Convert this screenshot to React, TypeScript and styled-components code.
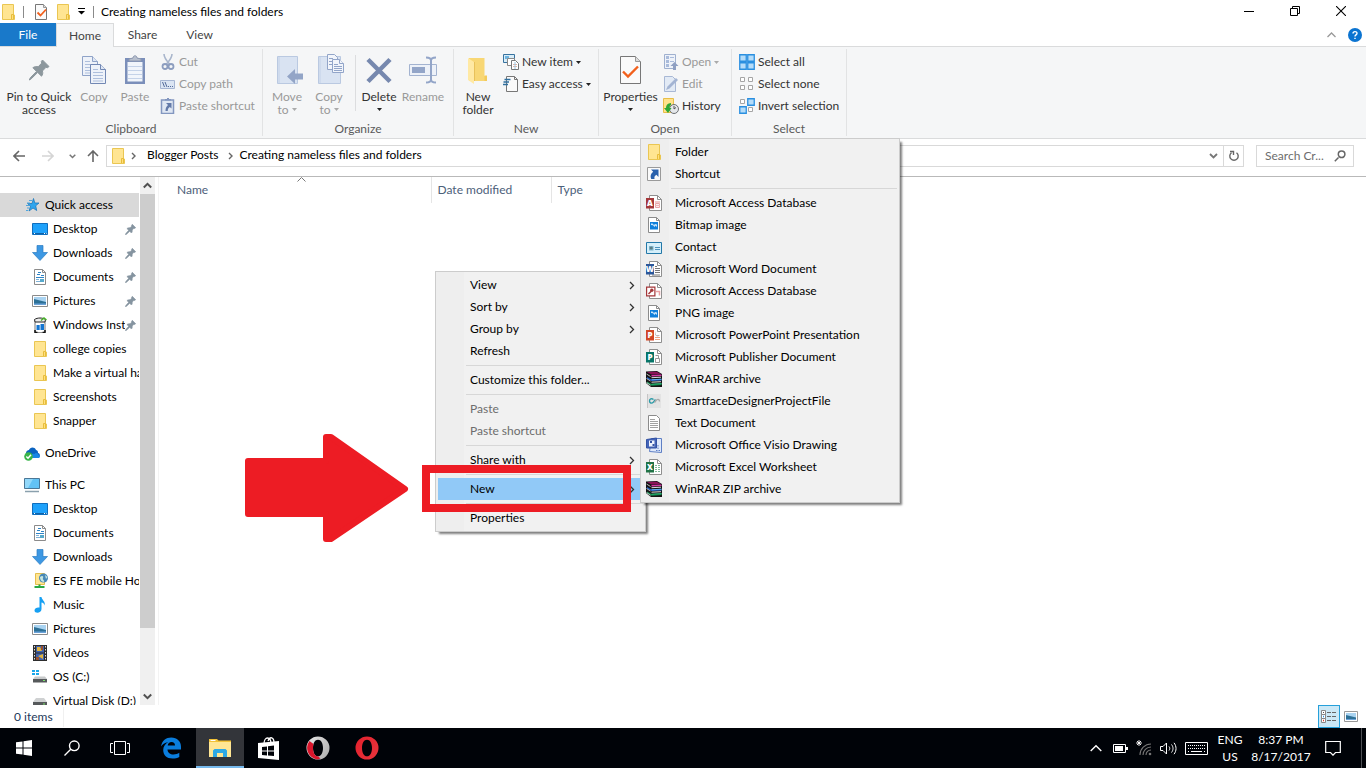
import React from "react";
import styled, { createGlobalStyle, css } from "styled-components";

const GlobalStyle = createGlobalStyle`
  *, *::before, *::after { box-sizing: border-box; }
  body { margin: 0; background: #fff; }
  button, input, table { font: inherit; color: inherit; }
  button { border: 0; background: none; padding: 0; margin: 0; text-align: left; }
  ul, ol { list-style: none; margin: 0; padding: 0; }
  svg { display: block; flex: none; }
`;

const Desktop = styled.div`
  position: relative;
  display: flex;
  flex-direction: column;
  height: 100vh;
  overflow: hidden;
  background: #fff;
  color: #000;
  font: 12px/16px Lato, "Noto Sans", sans-serif;
`;

/* ---------- title bar ---------- */

const TitleBar = styled.header`
  display: flex;
  align-items: center;
  height: 23px;
  flex: none;
  padding-right: 2px;
`;
const QuickTools = styled.div`
  display: flex;
  align-items: center;
  height: 23px;
  gap: 6px;
`;
const Tick = styled.span`
  width: 1px;
  height: 12px;
  margin: 0 3px 0 1px;
  background: #8a8a8a;
`;
const WindowTitle = styled.h1`
  flex: 1;
  margin: 0;
  padding-left: 4px;
  font-size: 12px;
  font-weight: 400;
  line-height: 23px;
`;
const WindowButton = styled.button`
  display: flex;
  align-items: center;
  justify-content: center;
  width: 46px;
  height: 20px;
  margin-bottom: 2px;
`;

/* ---------- ribbon ---------- */

const TabRow = styled.nav`
  display: flex;
  align-items: stretch;
  height: 24px;
  flex: none;
  color: #444;
  border-bottom: 1px solid #dadbdc;
`;
const Tab = styled.button<{ $kind?: "file" | "active" }>`
  width: 56px;
  text-align: center;
  line-height: 22px;
  ${(p) => p.$kind === "file" && css`
    height: 23px;
    background: #1979ca;
    color: #fff;
  `}
  ${(p) => p.$kind === "active" && css`
    width: 58px;
    height: 24px;
    background: #f5f6f7;
    border: 1px solid #dadbdc;
    border-bottom: 0;
    line-height: 20px;
  `}
  ${(p) => !p.$kind && css`
    width: 57px;
  `}
`;
const TabTools = styled.div`
  display: flex;
  align-items: center;
  gap: 12px;
  margin-left: auto;
  padding-right: 4px;
`;
const Ribbon = styled.section`
  display: flex;
  flex: none;
  height: 92px;
  padding: 2px 0;
  background: #f5f6f7;
  border-bottom: 1px solid #dadbdc;
  color: #333;
`;
const Group = styled.div<{ $w: number; $pad?: number }>`
  display: flex;
  flex-direction: column;
  width: ${(p) => p.$w}px;
  padding: 2px 0 0 ${(p) => p.$pad ?? 3}px;
  border-right: 1px solid #e2e3e4;
`;
const GroupBody = styled.div`
  display: flex;
  height: 71px;
`;
const GroupLabel = styled.div<{ $pad?: number }>`
  margin-left: -${(p) => p.$pad ?? 3}px;
  text-align: center;
  line-height: 14px;
  color: #5a5a5a;
`;
const BigButton = styled.button<{ $w: number; $off?: boolean }>`
  display: flex;
  flex-direction: column;
  align-items: center;
  gap: 4px;
  width: ${(p) => p.$w}px;
  padding-top: 3px;
  line-height: 13px;
  text-align: center;
  white-space: nowrap;
  color: ${(p) => (p.$off ? "#999" : "#333")};
`;
const BigLabel = styled.span`
  display: flex;
  flex-direction: column;
  align-items: center;
`;
const LabelLine = styled.span`
  display: flex;
  align-items: center;
  gap: 3px;
  height: 13px;
`;
const SmallColumn = styled.div<{ $gap?: number }>`
  display: flex;
  flex-direction: column;
  margin-left: ${(p) => p.$gap ?? 4}px;
`;
const SmallButton = styled.button<{ $off?: boolean }>`
  display: flex;
  align-items: center;
  gap: 3px;
  height: 22px;
  white-space: nowrap;
  color: ${(p) => (p.$off ? "#999" : "#333")};
`;
const Divider = styled.span`
  width: 1px;
  height: 56px;
  margin: 4px 1px 0 5px;
  background: #dcdddf;
`;

/* ---------- address row ---------- */

const AddressRow = styled.div`
  display: flex;
  flex: none;
  height: 38px;
  padding: 6px 12px 9px 8px;
  border-bottom: 1px solid #b9b9b9;
`;
const NavButtons = styled.div`
  display: flex;
  align-items: center;
  gap: 4px;
  width: 98px;
`;
const NavButton = styled.button<{ $w: number }>`
  display: flex;
  justify-content: center;
  width: ${(p) => p.$w}px;
`;
const AddressBar = styled.div`
  display: flex;
  align-items: center;
  flex: 1;
  height: 22px;
  padding-left: 3px;
  border: 1px solid #d9d9d9;
`;
const Crumb = styled.button`
  padding: 0 9px 2px 7px;
  line-height: 18px;
`;
const BarEnd = styled.div`
  display: flex;
  align-items: center;
  margin-left: auto;
  height: 20px;
`;
const BarButton = styled.button<{ $line?: boolean }>`
  display: flex;
  align-items: center;
  justify-content: center;
  width: 20px;
  height: 20px;
  border-left: 1px solid ${(p) => (p.$line ? "#d9d9d9" : "transparent")};
`;
const SearchBox = styled.label`
  display: flex;
  align-items: center;
  width: 98px;
  height: 22px;
  margin-left: 12px;
  padding: 0 7px 0 8px;
  border: 1px solid #d9d9d9;
`;
const SearchInput = styled.input`
  flex: 1;
  min-width: 0;
  padding: 0;
  border: 0;
  outline: 0;
  background: none;
  line-height: 18px;
  &::placeholder { color: #6d6d6d; opacity: 1; }
`;

/* ---------- body ---------- */

const Body = styled.div`
  display: flex;
  flex: 1;
  min-height: 0;
`;
const Sidebar = styled.aside`
  width: 139px;
  padding-top: 16px;
  overflow: hidden;
`;
const TreeGroup = styled.ul`
  margin-bottom: 8px;
`;
const TreeRow = styled.button<{ $root?: boolean; $on?: boolean }>`
  display: flex;
  align-items: center;
  gap: 5px;
  width: 100%;
  height: 24px;
  padding: 0 3px 0 ${(p) => (p.$root ? 24 : 32)}px;
  background: ${(p) => (p.$on ? "#d9d9d9" : "transparent")};
`;
const TreeText = styled.span<{ $bleed?: boolean }>`
  flex: 1;
  min-width: 0;
  margin-right: ${(p) => (p.$bleed ? -3 : 0)}px;
  overflow: hidden;
  white-space: nowrap;
`;
const TreePin = styled.span`
  margin-left: -5px;
`;
const Scroller = styled.div`
  display: flex;
  flex-direction: column;
  width: 15px;
  margin: 0 3px 0 1px;
  background: #f0f0f0;
`;
const ScrollArrow = styled.button`
  display: flex;
  align-items: center;
  justify-content: center;
  height: 17px;
`;
const Thumb = styled.div`
  flex: 434;
  background: #cdcdcd;
`;
const ThumbRest = styled.div`
  flex: 60;
`;
const FilePane = styled.main`
  flex: 1;
  border-left: 1px solid #f3f3f3;
`;
const FileTable = styled.table`
  width: 100%;
  table-layout: fixed;
  border-collapse: collapse;
`;
const HeadCell = styled.th<{ $w?: number; $pad: number; $last?: boolean }>`
  position: relative;
  width: ${(p) => (p.$w ? `${p.$w}px` : "auto")};
  height: 26px;
  padding: 0 0 0 ${(p) => p.$pad}px;
  border-right: ${(p) => (p.$last ? 0 : 1)}px solid #e5e5e5;
  font-weight: 400;
  text-align: left;
  color: #4c607a;
`;
const SortMark = styled.span`
  position: absolute;
  top: 0;
  left: 51%;
`;

const StatusBar = styled.footer`
  display: flex;
  align-items: center;
  flex: none;
  height: 23px;
  padding: 0 8px 0 14px;
  color: #1e395b;
`;
const StatusTick = styled.span`
  width: 1px;
  height: 20px;
  margin-left: 10px;
  background: #f0f0f0;
`;
const ViewButtons = styled.div`
  display: flex;
  align-items: center;
  gap: 4px;
  margin-left: auto;
`;
const ViewButton = styled.button<{ $on?: boolean }>`
  display: flex;
  align-items: center;
  justify-content: center;
  width: ${(p) => (p.$on ? 22 : 14)}px;
  height: 23px;
  border: ${(p) => (p.$on ? "1px solid #26a0da" : "0")};
  background: ${(p) => (p.$on ? "#cbe8f6" : "none")};
`;

/* ---------- menus and annotation ---------- */

const Menu = styled.ul<{ $x: number; $y: number; $w: number }>`
  position: absolute;
  left: ${(p) => p.$x}px;
  top: ${(p) => p.$y}px;
  width: ${(p) => p.$w}px;
  padding: 2px;
  border: 1px solid #ccc;
  background: linear-gradient(90deg, #eeeeee 28px, #f1f1f1 28px);
  box-shadow: 3px 3px 2px -1px rgba(0, 0, 0, 0.5);
`;
const MenuItem = styled.button<{ $on?: boolean; $off?: boolean }>`
  display: flex;
  align-items: center;
  width: 100%;
  height: 22px;
  padding-right: 4px;
  background: ${(p) => (p.$on ? "#91c9f7" : "transparent")};
  color: ${(p) => (p.$off ? "#6d6d6d" : "#000")};
`;
const MenuIcon = styled.span`
  display: flex;
  width: 32px;
  padding-left: 3px;
`;
const MenuText = styled.span`
  flex: 1;
`;
const MenuLine = styled.li`
  height: 7px;
  margin-left: 28px;
  padding-top: 3px;
  &::after {
    content: "";
    display: block;
    height: 1px;
    background: #d7d7d7;
  }
`;
const RedFrame = styled.div`
  position: absolute;
  left: 422px;
  top: 465px;
  width: 209px;
  height: 47px;
  border: 8px solid #ed1c24;
`;
const ArrowHolder = styled.div`
  position: absolute;
  left: 244px;
  top: 433px;
`;

/* ---------- taskbar ---------- */

const Taskbar = styled.footer`
  display: flex;
  align-items: stretch;
  flex: none;
  height: 40px;
  background: #000308;
  color: #fff;
`;
const TaskGroup = styled.div<{ $apps?: boolean }>`
  display: flex;
  gap: ${(p) => (p.$apps ? 1 : 0)}px;
  margin-left: ${(p) => (p.$apps ? 3 : 0)}px;
`;
const TaskButton = styled.button<{ $on?: boolean }>`
  display: flex;
  align-items: center;
  justify-content: center;
  width: 48px;
  ${(p) => p.$on && css`
    background: #33353a;
    border-bottom: 2px solid #76b9ed;
    padding-top: 2px;
  `}
`;
const Tray = styled.div`
  display: flex;
  align-items: center;
  margin-left: auto;
`;
const TrayButton = styled.button<{ $w: number }>`
  display: flex;
  flex-direction: column;
  align-items: center;
  justify-content: center;
  width: ${(p) => p.$w}px;
  height: 40px;
  line-height: 17px;
  white-space: nowrap;
`;
const ShowDesktop = styled.span`
  width: 5px;
  height: 40px;
  margin-left: 9px;
  border-left: 1px solid #4d4f53;
`;

/* ---------- icons ---------- */

type IconFn = () => React.ReactElement;

const Folder: IconFn = () => (
  <svg width="16" height="16" viewBox="0 0 16 16">
    <path d="M2.500.5h11v10.500h1v4.500H2.500z" fill="#ffe592" stroke="#eac652" />
    <path d="M11.500 15V10.500h2v4.500" fill="#ffe07c" stroke="#e8bd3c" />
  </svg>
);
const PropsSmall: IconFn = () => (
  <svg width="16" height="18" viewBox="0 0 16 18">
    <path d="M2.500 1.500h8l3 3v12h-11z" fill="#fafafa" stroke="#777" />
    <path d="M10.500 1.500v3h3" fill="#ddd" stroke="#999" />
    <path d="M4.500 9.500l3 3L13 6.500" fill="none" stroke="#f2601c" strokeWidth="1.800" />
  </svg>
);
const Caret = ({ color = "#222" }: { color?: string }) => (
  <svg width="5" height="3" viewBox="0 0 5 3"><path d="M0 0h5L2.500 3z" fill={color} /></svg>
);
const CustomizeMark: IconFn = () => (
  <svg width="9" height="8" viewBox="0 0 9 8"><path d="M1 .5h7" stroke="#000" /><path d="M1 3h7L4.500 6.500z" fill="#000" /></svg>
);
const Chevron = ({ d, w = 8, h = 8, color = "#555", sw = 1.3 }: { d: string; w?: number; h?: number; color?: string; sw?: number }) => (
  <svg width={w} height={h} viewBox={`0 0 ${w} ${h}`}><path d={d} fill="none" stroke={color} strokeWidth={sw} /></svg>
);

const SmallPin: IconFn = () => (
  <svg width="11" height="11" viewBox="0 0 11 11">
    <path d="M7.300.3l3.400 3.400-1.200.8-.7-.1L7.200 6c.2 1.200 0 2.200-.8 3L4.700 7.300 1.500 10.300.4 10.700.8 9.600 3.700 6.300 1.900 4.600c.9-.8 1.900-1 3.100-.8L6.600 2.200l-.1-.8z" fill="#8594a0" stroke="#8594a0" strokeWidth=".6" />
  </svg>
);
const BigPin: IconFn = () => (
  <svg width="32" height="32" viewBox="0 0 32 32">
    <g transform="translate(6 6)">
      <path d="M13.500 0L20 6.500l-1.500 1.200-1.500-.4-3.600 3.700c.7 2 .3 3.700-.9 5.200L8.700 12.400 2.400 18.700.3 20l1-2.200 6.200-6.400L3.900 7.700C5.700 6.500 7.400 6.300 9.200 6.800l3.500-3.700-.4-1.600z" fill="#8c979d" stroke="#8c979d" />
    </g>
  </svg>
);
const Sheet = ({ x, y, c = "#8fa3c8" }: { x: number; y: number; c?: string }) => (
  <g transform={`translate(${x} ${y})`}>
    <path d="M.5.5h10l5 5v14H.5z" fill="#eef2f9" stroke={c} />
    <path d="M10.500.5v5h5" fill="#dfe7f4" stroke={c} />
    <path d="M3 5.500h5M3 8.500h10M3 11.500h10M3 14.500h10M3 17h10" stroke="#aebfdc" />
  </g>
);
const CopyBig: IconFn = () => (
  <svg width="32" height="32" viewBox="0 0 32 32"><Sheet x={4} y={2} /><Sheet x={12} y={10} c="#7288b4" /></svg>
);
const PasteBig: IconFn = () => (
  <svg width="32" height="32" viewBox="0 0 32 32">
    <path d="M6 4h20v26H6z" fill="#7b8fba" />
    <path d="M8.500 8h15v19.500h-15z" fill="#f1f5fb" />
    <path d="M9 12.500h14M9 16.500h14M9 20.500h14M9 24.500h14" stroke="#c4d2e8" />
    <path d="M10 7V5l4-1c0-3 4-3 4 0l4 1v2z" fill="#b7bfcd" stroke="#8e99b0" />
  </svg>
);
const CutIcon: IconFn = () => (
  <svg width="16" height="16" viewBox="0 0 16 16" fill="none" stroke="#8c9dbf">
    <path d="M4 0c0 3 1 5 5.500 10M12 0c0 3-1 5-5.500 10" strokeWidth="1.600" stroke="#a9b6cc" />
    <circle cx="5" cy="12.500" r="2.500" strokeWidth="1.800" /><circle cx="11" cy="12.500" r="2.500" strokeWidth="1.800" />
  </svg>
);
const CopyPathIcon: IconFn = () => (
  <svg width="16" height="16" viewBox="0 0 16 16">
    <path d="M.5 4.500h14v8H.5z" fill="#dbe5f3" stroke="#a6b6d3" />
    <path d="M2.500 6l2 5M5 6l2 5" stroke="#536b9a" /><path d="M8 10.500h1M10 10.500h1M12 10.500h1" stroke="#536b9a" />
  </svg>
);
const PasteShortcutIcon: IconFn = () => (
  <svg width="16" height="16" viewBox="0 0 16 16">
    <path d="M1.500 2h12v13.500h-12z" fill="#dfe7f3" stroke="#8397c0" strokeWidth="1.500" />
    <path d="M5 2.500V1h2V0h2v1h2v1.500z" fill="#8397c0" />
    <path d="M6 5h5.500v5.500L9.800 9c-1.800 1.200-2 2.200-2 4H5.500c0-3 .8-4.500 2.500-6z" fill="#637aa9" />
  </svg>
);
const MoveToIcon: IconFn = () => (
  <svg width="32" height="32" viewBox="0 0 32 32">
    <path d="M6.500 2.500h20v27h-20z" fill="#d9e3f2" stroke="#bac9e1" /><path d="M8 3v26" stroke="#c4d2e8" />
    <path d="M16 22.500L24 15v4.500h8v6h-8V30z" fill="#93a5c7" />
  </svg>
);
const CopyToIcon: IconFn = () => (
  <svg width="32" height="32" viewBox="0 0 32 32">
    <path d="M5.500 2.500h22v27h-22z" fill="#d9e3f2" stroke="#bac9e1" /><path d="M7 3v26" stroke="#c4d2e8" />
    <g fill="#f2f5fb" stroke="#92a5c9">
      <path d="M14.500.5h7l3 3v12h-10z" /><path d="M19.500 5.500h7l4 4v9h-11z" />
      <path d="M26.500 5.500v4h4M21 10.500h4M21 12.500h8M21 14.500h8M21 16.500h8M16 4.500h4M16 7.500h3M16 10.500h3" />
    </g>
  </svg>
);
const DeleteIcon: IconFn = () => (
  <svg width="32" height="32" viewBox="0 0 32 32"><path d="M5 5.500l22 22M27 5.500l-22 22" stroke="#7688ae" strokeWidth="4.500" fill="none" /></svg>
);
const RenameIcon: IconFn = () => (
  <svg width="32" height="32" viewBox="0 0 32 32" fill="none">
    <path d="M2.500 10.500h27v11h-27z" fill="#edf1f8" stroke="#a3b3d0" /><path d="M5 13h13v6H5z" fill="#93a5c8" />
    <path d="M19 3.500c3 0 5 .5 5 3v19c0 2.500-2 3-5 3M29 3.500c-3 0-5 .5-5 3v19c0 2.500 2 3 5 3" stroke="#93a5c8" strokeWidth="2" />
  </svg>
);
const NewFolderIcon: IconFn = () => (
  <svg width="32" height="32" viewBox="0 0 32 32">
    <path d="M7 4h15.500v18H25v5H7z" fill="#f8d775" /><path d="M22.500 21.500H25V27h-2.500z" fill="#f3ca5c" />
    <path d="M6 4l6 4v22l-6-4z" fill="#ffe9a4" /><path d="M12.500 8v19" stroke="#e8c15a" />
  </svg>
);
const NewItemIcon: IconFn = () => (
  <svg width="16" height="16" viewBox="0 0 16 16">
    <path d="M.5.500h11v8H.5z" fill="#d8ecf7" stroke="#37729f" /><path d="M2 2h4v3H2z" fill="#6db3df" />
    <path d="M4.500 4.500h7v7h-7z" fill="#fff" stroke="#888" /><path d="M8.500 6.500h4l3 3v6h-7z" fill="#fff" stroke="#777" />
    <path d="M10 10.500h4M10 12.500h4" stroke="#e3b5a2" /><path d="M12 8v7" stroke="#9ec7e4" />
  </svg>
);
const EasyIcon: IconFn = () => (
  <svg width="16" height="16" viewBox="0 0 16 16">
    <path d="M3.500.5h8l3 3v12h-11z" fill="#fafafa" stroke="#777" /><path d="M11.500.5v3h3" fill="none" stroke="#777" />
    <path d="M1.500 3.500h6M.5 6h5.500M0 8.500h5" stroke="#2f6f9e" strokeWidth="1.300" />
  </svg>
);
const PropsBig: IconFn = () => (
  <svg width="32" height="32" viewBox="0 0 32 32">
    <path d="M5.500 2.500h15l5 5v22h-20z" fill="#fafafa" stroke="#777" /><path d="M20.500 2.500v5h5" fill="#ddd" stroke="#999" />
    <path d="M8 17.500l5 5L23 12.500" fill="none" stroke="#f2601c" strokeWidth="2.400" />
  </svg>
);
const OpenIcon: IconFn = () => (
  <svg width="16" height="16" viewBox="0 0 16 16">
    <path d="M1.500.5h11v14h-11z" fill="#eef2f9" stroke="#9fb0cf" /><path d="M3 2h3v3H3zM3 6h3v3H3zM3 10h3v3H3z" fill="#a9bbdb" />
    <path d="M7 3.500h4M7 7.500h4" stroke="#a9bbdb" /><path d="M11.500 8l4 4h-2.500v4h-3v-4H7.500z" fill="#8e9fc2" />
  </svg>
);
const EditIcon: IconFn = () => (
  <svg width="16" height="16" viewBox="0 0 16 16">
    <path d="M1.500.5h8l3 3v12h-11z" fill="#e2eaf5" stroke="#a8b8d5" /><path d="M3 14l1.500-3.500L13 2l2 2-8.500 8.500z" fill="#a3b4d3" />
  </svg>
);
const HistoryIcon: IconFn = () => (
  <svg width="16" height="16" viewBox="0 0 16 16">
    <path d="M.5.500h10v14H.5z" fill="#ffe28c" stroke="#e8be47" />
    <circle cx="11" cy="11" r="4.500" fill="#e4e7ea" stroke="#6c6f73" /><path d="M11 8v3l2-1.500" stroke="#555" fill="none" />
    <path d="M8 5C4.500 5.500 3 7 3 10H1l4 5 3.500-5H6.500c0-1.500.5-2.500 1.500-3z" fill="#2fa836" />
  </svg>
);
const Squares = ({ on }: { on: number[] }) => (
  <svg width="16" height="16" viewBox="0 0 16 16">
    {[[0, 0], [8, 0], [0, 8], [8, 8]].map(([x, y], i) =>
      on.includes(i) ? (
        <path key={i} d={`M${x + 0.75} ${y + 0.75}h6.500v6.500h-6.500z`} fill="#b5dcf9" stroke="#2a8fe0" strokeWidth="1.300" />
      ) : (
        <path key={i} d={`M${x + 1.5} ${y + 1.5}h4v4h-4z`} fill="#fff" stroke="#a5a5a5" />
      )
    )}
  </svg>
);
const SelectAllIcon: IconFn = () => <Squares on={[0, 1, 2, 3]} />;
const SelectNoneIcon: IconFn = () => <Squares on={[]} />;
const InvertIcon: IconFn = () => <Squares on={[1, 2]} />;

const StarIcon: IconFn = () => (
  <svg width="16" height="16" viewBox="0 0 16 16">
    <path d="M9.500 1.500L10.800 6H15l-3.300 2.800 1 4.700L9 11l-4 3 1.500-4.800L3.500 6.500H8z" fill="#2ea5ee" stroke="#1d79bd" strokeWidth=".8" />
    <path d="M5 3.500h3M3 6h3M2 8.500h3M3 11h2M2 13.500h2" stroke="#4fa5dc" />
  </svg>
);
const DesktopIcon: IconFn = () => (
  <svg width="16" height="16" viewBox="0 0 16 16">
    <path d="M.5 2.500h15v11H.5z" fill="#1fa2fb" stroke="#106ebe" /><path d="M1 12.500h14" stroke="#0f63a8" /><path d="M2 12.500h1M12 12.500h1M14 12.500h.6" stroke="#fff" />
  </svg>
);
const DownIcon: IconFn = () => (
  <svg width="16" height="16" viewBox="0 0 16 16"><path d="M5 .5h6v7h4.500L8 15.500.5 7.500H5z" fill="#3d98e3" stroke="#2c7cc2" strokeWidth=".7" /></svg>
);
const DocIcon: IconFn = () => (
  <svg width="16" height="16" viewBox="0 0 16 16">
    <path d="M2.500.5h8l3 3v12h-11z" fill="#fff" stroke="#8b8b8b" /><path d="M10.500.5v3h3" fill="none" stroke="#8b8b8b" />
    <path d="M5 5.500h3M6 3.500h3M9 6.500h3M4 8.500h8" stroke="#2e84c6" /><path d="M4 10.500h3M4 12.500h4" stroke="#7fb2d8" /><path d="M8 10h4v3H8z" fill="#57a9cc" />
  </svg>
);
const PicIcon: IconFn = () => (
  <svg width="16" height="16" viewBox="0 0 16 16">
    <path d="M.5 2.500h15v11H.5z" fill="#fff" stroke="#8b8b8b" /><path d="M2 4h12v8H2z" fill="#a9d3f1" />
    <path d="M2 6l4 1 8 2v2H2z" fill="#2d7096" /><path d="M2 10.500h12V12H2z" fill="#6ba2d8" />
  </svg>
);
const RecycleLikeIcon: IconFn = () => (
  <svg width="16" height="16" viewBox="0 0 16 16">
    <path d="M3 4.500h10V15c-3 1-7 1-10 0z" fill="#fff" stroke="#777" /><path d="M2.500 2.500c3-2 8-2 11 0L13 5H3z" fill="#eee" stroke="#222" />
    <path d="M3 13v2.500h2.500M13 13v2.500h-2.500" fill="none" stroke="#111" strokeWidth="1.500" />
    <path d="M9 3.500l3-2.500 2.500 2" stroke="#45b025" strokeWidth="1.500" fill="none" /><path d="M4.500 8h3.200v5H4.500zM8.500 7h3.500v6H8.500z" fill="#1476d2" />
  </svg>
);
const CloudIcon: IconFn = () => (
  <svg width="16" height="16" viewBox="0 0 16 16">
    <path d="M2 9c-.500-3 2-4 3-4 1-3 5.500-3.500 7 0 2 .2 2 2 2 3 2.500 0 2.500 5 0 5H4z" fill="#0a63c0" /><path d="M6 12c0-3 3-4 4.500-3 1-2 4-1 4 1 2 .500 1.500 3 0 3H6z" fill="#1886e5" />
    <circle cx="4.500" cy="11.500" r="4.300" fill="#3ab54a" /><path d="M2.300 11.600l1.700 1.700 3-3.500" stroke="#fff" strokeWidth="1.400" fill="none" />
  </svg>
);
const PcIcon: IconFn = () => (
  <svg width="16" height="16" viewBox="0 0 16 16">
    <path d="M.5 1.500h15v10H.5z" fill="#62c2f5" stroke="#4b7796" /><path d="M1 2l8 0-5 9H1z" fill="#92d8fa" /><path d="M1 14.500h14" stroke="#8aa0ad" strokeWidth="1.500" />
  </svg>
);
const NetFolderIcon: IconFn = () => (
  <svg width="16" height="16" viewBox="0 0 16 16">
    <path d="M3.500.5h9v11h-9z" fill="#ffe592" stroke="#e5bf4c" /><circle cx="11.500" cy="5" r="4.500" fill="#4688b8" /><path d="M8 4c2-2 4-1 3 1s2 2 1 4c-3 0-4-3-4-5zM13 2l2.500 2-1.500 2z" fill="#c7e6df" />
    <path d="M2.500 14h10M7.500 11.500V15" stroke="#2aa844" strokeWidth="2" />
  </svg>
);
const MusicIcon: IconFn = () => (
  <svg width="16" height="16" viewBox="0 0 16 16">
    <path d="M7.500 0h2c.3 3 4 4 3.300 8.500-.5-1.700-1.600-2.700-3.300-3V12c0 4.500-7 4.800-7 1.500C2.500 11 5.300 10 7.500 10.500z" fill="#16a0f3" />
  </svg>
);
const VideoIcon: IconFn = () => (
  <svg width="16" height="16" viewBox="0 0 16 16">
    <path d="M1 0h14v16H1z" fill="#2d2d2d" /><path d="M4 1h8v6.500H4zM4 8.500h8V15H4z" fill="#4062ae" /><path d="M5 2h3l2 4H5zM6 11l5-2v5z" fill="#dfb43f" />
    <path d="M9 1h2v4H9zM4 12h3v3H4z" fill="#99512e" /><path d="M2.500 1v14M13.500 1v14" stroke="#ddd" strokeDasharray="1.500 1.500" />
  </svg>
);
const OsDriveIcon: IconFn = () => (
  <svg width="16" height="16" viewBox="0 0 16 16">
    <path d="M0 1h3v2H0zM4 1h3v2H4zM0 4h3v2H0zM4 4h3v2H4z" fill="#1ba7e9" /><path d="M3 7.500h10l2 2.500H1z" fill="#c7c9ca" /><path d="M1 10h14v3.500H1z" fill="#56595b" /><path d="M11 11.500h2" stroke="#7be36b" />
  </svg>
);
const DriveIcon: IconFn = () => (
  <svg width="16" height="16" viewBox="0 0 16 16"><path d="M4 5h8l3 4H1z" fill="#cfd1d2" /><path d="M1 9h14v4H1z" fill="#56595b" /><path d="M11 11h2" stroke="#7be36b" /></svg>
);

const ShortcutIcon: IconFn = () => (
  <svg width="16" height="16" viewBox="0 0 16 16">
    <path d="M1.500 1.500h13v13h-13z" fill="#fafafa" stroke="#9a9a9a" /><path d="M5 3.500h7.500V11l-2.200-2.200C8.500 10 8.200 11 8.500 13H5.200C4 10 4.700 7.500 7.200 5.700z" fill="#2b62ad" />
  </svg>
);
const OfficeIcon = ({ letter, color, children }: { letter?: string; color: string; children?: React.ReactNode }) => (
  <svg width="16" height="16" viewBox="0 0 16 16">
    <path d="M3.500.5h8l4 4v11h-12z" fill="#fff" stroke="#8f8f8f" /><path d="M11.500.5v4h4" fill="none" stroke="#8f8f8f" />
    {children}
    {letter ? (
      <g>
        <path d="M0 3h8v10.500H0z" fill={color} />
        <text x="4" y="11" textAnchor="middle" fontFamily="Open Sans, sans-serif" fontSize="8" fontWeight="800" fill="#fff">{letter}</text>
      </g>
    ) : (
      <g>
        <path d="M.6 4.100h8.300v8.800H.6z" fill="#fff" stroke={color} strokeWidth="1.200" />
        <path d="M2.500 11l2.700-2.700" stroke={color} strokeWidth="1.500" /><circle cx="5.800" cy="7.300" r="1.700" fill={color} />
      </g>
    )}
  </svg>
);
const AccessIcon: IconFn = () => <OfficeIcon letter="A" color="#a4373a"><path d="M9.500 8.500h4v4h-4z" fill="#fff" stroke="#e8a3a5" /><path d="M9 7h5M9 10.500h5" stroke="#eeb5b6" strokeWidth="1.500" /></OfficeIcon>;
const AccessKeyIcon: IconFn = () => <OfficeIcon color="#a4373a"><path d="M10 8.500h3.500v4" stroke="#eba1a3" strokeWidth="1.500" fill="none" /></OfficeIcon>;
const WordIcon: IconFn = () => <OfficeIcon letter="W" color="#2b579a"><path d="M9 5.500h2M9 7.500h5M9 9.500h5M9 11.500h5M6 14h8" stroke="#777" /></OfficeIcon>;
const PowerIcon: IconFn = () => <OfficeIcon letter="P" color="#d24726"><path d="M9.500 4v4.500H14A4 4 0 0 1 9 8z" fill="#777" /><path d="M9 10.500h5M9 12.500h5" stroke="#f0a583" strokeWidth="1.200" /></OfficeIcon>;
const PublisherIcon: IconFn = () => <OfficeIcon letter="P" color="#077568"><path d="M9.500 9.500h4v4h-4zM9.500 6.500h3v3" fill="#fff" stroke="#999" /></OfficeIcon>;
const ExcelIcon: IconFn = () => <OfficeIcon letter="X" color="#217346"><path d="M10 6v8M13 6v8" stroke="#7fb899" strokeWidth="2" strokeDasharray="1 1" /></OfficeIcon>;
const ImageFileIcon: IconFn = () => (
  <svg width="16" height="16" viewBox="0 0 16 16">
    <path d="M2.500.5h8l3 3v12h-11z" fill="#fff" stroke="#8b8b8b" /><path d="M10.500.5v3h3" fill="none" stroke="#8b8b8b" /><path d="M4 5h8v7.500H4z" fill="#0f7fdb" />
    <path d="M5 6.500h1.500L8 8l1-1 2 .5v2.700L9.700 8.500 8.500 10 7 8.300 5 8z" fill="#cde7fa" />
  </svg>
);
const ContactIcon: IconFn = () => (
  <svg width="16" height="16" viewBox="0 0 16 16">
    <path d="M.5 3.500h15v11H.5z" fill="#d5effa" stroke="#2378a8" /><path d="M3 7h4.500v4.500H3z" fill="#7fb7cf" /><circle cx="5.200" cy="9" r="1.600" fill="#5c7f86" /><path d="M9 8.500h5M9 10.500h5" stroke="#4d92bc" />
  </svg>
);
const RarIcon: IconFn = () => (
  <svg width="16" height="16" viewBox="0 0 16 16">
    <path d="M0 .5L11 0l5 3v13H5L0 12z" fill="#151515" />
    <path d="M1 1l9.500-.3L15 3 5.500 3.500z" fill="#8b1258" /><path d="M5.500 4L15.500 3.500V5L5.500 5.500z" fill="#d338a4" />
    <path d="M1 6l4.500 2.500 10-.7v1.700l-10 .5L1 7.500z" fill="#1d5fc4" /><path d="M5.500 8.300l10-.5v.9l-10 .5z" fill="#62aef0" />
    <path d="M1 10.500L5.500 13l10-.7V14l-10 .8L1 12.200z" fill="#0f8a4c" /><path d="M5.500 12.700l10-.5v.9l-10 .5z" fill="#38c586" />
    <path d="M5.500 6.700l9.500-.5M5.500 11.200l9.500-.5" stroke="#f0f0f0" strokeWidth=".9" /><path d="M.5 3l4 2.500M.5 7.500l4 2.500M.5 11.500l4 2.800" stroke="#e5e5e5" strokeWidth=".8" />
  </svg>
);
const SmartfaceIcon: IconFn = () => (
  <svg width="16" height="16" viewBox="0 0 16 16" fill="none">
    <path d="M1 1h14v14H1z" fill="#e3e3e3" /><path d="M1.500 1v14" stroke="#c5c5c5" />
    <path d="M7.500 6.500c-2-1.500-4-.5-4 1.500s2 3 4 1l2-2.500" stroke="#2f9ca8" strokeWidth="1.400" /><path d="M8.500 9.500l2-2.500c2-1.500 3 0 3 1.500" stroke="#a9a9a9" strokeWidth="1.300" />
  </svg>
);
const TextIcon: IconFn = () => (
  <svg width="16" height="16" viewBox="0 0 16 16">
    <path d="M2.500.5h8l3 3v12h-11z" fill="#fff" stroke="#8b8b8b" /><path d="M4 4.500h5M4 6.500h8M4 8.500h8M4 10.500h8M4 12.500h8" stroke="#a2a2a2" />
  </svg>
);
const VisioIcon: IconFn = () => (
  <svg width="16" height="16" viewBox="0 0 16 16">
    <path d="M5.500 1.500h10v14l-12-1z" fill="#dfe9fb" stroke="#5e7fc4" /><path d="M.5 2.500l10-1.500v10h-10z" fill="#4464b8" stroke="#3352a3" /><path d="M3 3.500h5.500v6H3z" fill="#eef3fd" />
    <path d="M4 4h2v2H4zM6.500 7h2v2h-2z" fill="#3352a3" /><path d="M12 8v4M10 13.500h4" stroke="#5e7fc4" strokeDasharray="1.500 1" />
  </svg>
);

const Edge: IconFn = () => (
  <svg width="22" height="22" viewBox="0 0 22 22">
    <path d="M1 9.500C2 3.500 6 .5 11.200.5c6 0 9.800 4 9.800 9.200v2.700H7.500c.2 3.300 2.800 5 6 5 2.200 0 4.200-.6 5.800-1.600v4.300c-2 1-4.200 1.500-6.800 1.500-5.800 0-9.300-3.400-9.300-8.500 0-3.500 2-6.300 5-7.800C4.500 5.800 2.500 7.500 1 9.500zm6.700-1H15c0-2.300-1.200-3.600-3.500-3.600-2 0-3.500 1.300-3.800 3.600z" fill="#0a7ddd" />
  </svg>
);
const Explorer: IconFn = () => (
  <svg width="22" height="18" viewBox="0 0 22 18">
    <path d="M0 0h8l1.500 1.500H22V18H0z" fill="#f2c238" /><path d="M0 3h22v15H0z" fill="#ffe694" /><path d="M1.500 1h5v1h-5z" fill="#fff" />
    <path d="M4 18v-6.500l1.500-1.500h11l1.500 1.500V18h-4v-4H8v4z" fill="#2ea9e5" />
  </svg>
);
const Store: IconFn = () => (
  <svg width="22" height="24" viewBox="0 0 22 24">
    <path d="M6 8c0-8 7-8 7 0M10 5c2-5 6-4 6 2" fill="none" stroke="#fff" strokeWidth="1.300" />
    <path d="M0 7l21-2v19L0 22z" fill="#fff" /><path d="M4 11l5-.6v4H4zM10 10.300l6-.7v4.800h-6zM4 15.500h5v4l-5-.5zM10 15.500h6V20l-6-.5z" fill="#000308" />
  </svg>
);
const Opera = ({ silver }: { silver?: boolean }) => (
  <svg width="24" height="24" viewBox="0 0 24 24">
    <defs>
      <linearGradient id={silver ? "opS" : "opR"} x1="0" x2="1" y1="0" y2=".6">
        <stop offset="0" stopColor={silver ? "#e8e8e8" : "#e3202c"} /><stop offset="1" stopColor={silver ? "#b5b5b5" : "#e8323a"} />
      </linearGradient>
    </defs>
    <path fillRule="evenodd" d="M12 .5a11.500 11.500 0 1 0 0 23 11.500 11.500 0 0 0 0-23zm0 3.200c3 0 5 3.500 5 8.300s-2 8.300-5 8.300-5-3.500-5-8.300 2-8.300 5-8.300z" fill={silver ? "url(#opS)" : "url(#opR)"} />
    {silver && <path d="M3.500 5A11.500 11.500 0 0 0 11 23.400c1.500 0 2.500-.3 3.500-.8L12 20.300c-3 0-5-3.500-5-8.300 0-1.500.2-2.800.5-4z" fill="#d9162c" />}
  </svg>
);

/* ---------- data ---------- */

type Row = { icon: IconFn; text: string; pinned?: boolean; bleed?: boolean };
const quickRows: Row[] = [
  { icon: DesktopIcon, text: "Desktop", pinned: true },
  { icon: DownIcon, text: "Downloads", pinned: true },
  { icon: DocIcon, text: "Documents", pinned: true },
  { icon: PicIcon, text: "Pictures", pinned: true },
  { icon: RecycleLikeIcon, text: "Windows Inst", pinned: true },
  { icon: Folder, text: "college copies" },
  { icon: Folder, text: "Make a virtual hard disk", bleed: true },
  { icon: Folder, text: "Screenshots" },
  { icon: Folder, text: "Snapper" },
];
const pcRows: Row[] = [
  { icon: DesktopIcon, text: "Desktop" },
  { icon: DocIcon, text: "Documents" },
  { icon: DownIcon, text: "Downloads" },
  { icon: NetFolderIcon, text: "ES FE mobile Home", bleed: true },
  { icon: MusicIcon, text: "Music" },
  { icon: PicIcon, text: "Pictures" },
  { icon: VideoIcon, text: "Videos" },
  { icon: OsDriveIcon, text: "OS (C:)" },
  { icon: DriveIcon, text: "Virtual Disk (D:)", bleed: true },
];

type Entry = { text: string; more?: boolean; off?: boolean; on?: boolean } | null;
const contextEntries: Entry[] = [
  { text: "View", more: true },
  { text: "Sort by", more: true },
  { text: "Group by", more: true },
  { text: "Refresh" },
  null,
  { text: "Customize this folder..." },
  null,
  { text: "Paste", off: true },
  { text: "Paste shortcut", off: true },
  null,
  { text: "Share with", more: true },
  null,
  { text: "New", more: true, on: true },
  null,
  { text: "Properties" },
];
const newEntries: ({ icon: IconFn; text: string } | null)[] = [
  { icon: Folder, text: "Folder" },
  { icon: ShortcutIcon, text: "Shortcut" },
  null,
  { icon: AccessIcon, text: "Microsoft Access Database" },
  { icon: ImageFileIcon, text: "Bitmap image" },
  { icon: ContactIcon, text: "Contact" },
  { icon: WordIcon, text: "Microsoft Word Document" },
  { icon: AccessKeyIcon, text: "Microsoft Access Database" },
  { icon: ImageFileIcon, text: "PNG image" },
  { icon: PowerIcon, text: "Microsoft PowerPoint Presentation" },
  { icon: PublisherIcon, text: "Microsoft Publisher Document" },
  { icon: RarIcon, text: "WinRAR archive" },
  { icon: SmartfaceIcon, text: "SmartfaceDesignerProjectFile" },
  { icon: TextIcon, text: "Text Document" },
  { icon: VisioIcon, text: "Microsoft Office Visio Drawing" },
  { icon: ExcelIcon, text: "Microsoft Excel Worksheet" },
  { icon: RarIcon, text: "WinRAR ZIP archive" },
];

/* ---------- parts ---------- */

const Big = ({ icon: Icon, lines, w, off, caret }: { icon: IconFn; lines: string[]; w: number; off?: boolean; caret?: "inline" | "below" }) => (
  <BigButton $w={w} $off={off}>
    <Icon />
    <BigLabel>
      {lines.map((l, i) => (
        <LabelLine key={l}>
          {l}
          {caret === "inline" && i === lines.length - 1 && <Caret color="#aaa" />}
        </LabelLine>
      ))}
      {caret === "below" && <LabelLine><Caret /></LabelLine>}
    </BigLabel>
  </BigButton>
);
const Small = ({ icon: Icon, text, off, caret }: { icon: IconFn; text: string; off?: boolean; caret?: boolean }) => (
  <SmallButton $off={off}>
    <Icon />
    <span>{text}</span>
    {caret && <Caret color={off ? "#aaa" : "#222"} />}
  </SmallButton>
);
const TreeItem = ({ row, root, on }: { row: Row; root?: boolean; on?: boolean }) => (
  <li>
    <TreeRow $root={root} $on={on}>
      <row.icon />
      <TreeText $bleed={row.bleed}>{row.text}</TreeText>
      {row.pinned && <TreePin><SmallPin /></TreePin>}
    </TreeRow>
  </li>
);

export default function App() {
  return (
    <Desktop>
      <GlobalStyle />
      <TitleBar>
        <QuickTools>
          <Folder /><Tick /><PropsSmall /><Folder /><CustomizeMark /><Tick />
        </QuickTools>
        <WindowTitle>Creating nameless files and folders</WindowTitle>
        <WindowButton aria-label="Minimize"><Chevron w={10} h={2} d="M0 1.500h10" color="#000" sw={1} /></WindowButton>
        <WindowButton aria-label="Restore"><Chevron w={10} h={10} d="M.5 2.500h7v7h-7zM2.500 2.500v-2h7v7h-2" color="#000" sw={1} /></WindowButton>
        <WindowButton aria-label="Close"><Chevron w={10} h={10} d="M0 0l10 10M10 0L0 10" color="#000" sw={1.1} /></WindowButton>
      </TitleBar>

      <TabRow>
        <Tab $kind="file">File</Tab>
        <Tab $kind="active">Home</Tab>
        <Tab>Share</Tab>
        <Tab>View</Tab>
        <TabTools>
          <Chevron w={9} h={6} d="M.5 5l4-4 4 4" color="#999" />
          <svg width="14" height="14" viewBox="0 0 14 14">
            <circle cx="7" cy="7" r="7" fill="#0b74d1" />
            <path d="M5 5.500C5 3 9 3 9 5.300 9 7 7 6.800 7 8.500M7 9.700v1.400" fill="none" stroke="#fff" strokeWidth="1.400" />
          </svg>
        </TabTools>
      </TabRow>

      <Ribbon>
        <Group $w={263} $pad={4}>
          <GroupBody>
            <Big icon={BigPin} lines={["Pin to Quick", "access"]} w={70} />
            <Big icon={CopyBig} lines={["Copy"]} w={40} off />
            <Big icon={PasteBig} lines={["Paste"]} w={42} off />
            <SmallColumn>
              <Small icon={CutIcon} text="Cut" off />
              <Small icon={CopyPathIcon} text="Copy path" off />
              <Small icon={PasteShortcutIcon} text="Paste shortcut" off />
            </SmallColumn>
          </GroupBody>
          <GroupLabel $pad={4}>Clipboard</GroupLabel>
        </Group>
        <Group $w={191}>
          <GroupBody>
            <Big icon={MoveToIcon} lines={["Move", "to"]} w={42} off caret="inline" />
            <Big icon={CopyToIcon} lines={["Copy", "to"]} w={42} off caret="inline" />
            <Divider />
            <Big icon={DeleteIcon} lines={["Delete"]} w={44} caret="below" />
            <Big icon={RenameIcon} lines={["Rename"]} w={44} off />
          </GroupBody>
          <GroupLabel>Organize</GroupLabel>
        </Group>
        <Group $w={145}>
          <GroupBody>
            <Big icon={NewFolderIcon} lines={["New", "folder"]} w={42} />
            <SmallColumn>
              <Small icon={NewItemIcon} text="New item" caret />
              <Small icon={EasyIcon} text="Easy access" caret />
            </SmallColumn>
          </GroupBody>
          <GroupLabel>New</GroupLabel>
        </Group>
        <Group $w={133}>
          <GroupBody>
            <Big icon={PropsBig} lines={["Properties"]} w={57} caret="below" />
            <SmallColumn>
              <Small icon={OpenIcon} text="Open" off caret />
              <Small icon={EditIcon} text="Edit" off />
              <Small icon={HistoryIcon} text="History" />
            </SmallColumn>
          </GroupBody>
          <GroupLabel>Open</GroupLabel>
        </Group>
        <Group $w={115}>
          <GroupBody>
            <SmallColumn>
              <Small icon={SelectAllIcon} text="Select all" />
              <Small icon={SelectNoneIcon} text="Select none" />
              <Small icon={InvertIcon} text="Invert selection" />
            </SmallColumn>
          </GroupBody>
          <GroupLabel>Select</GroupLabel>
        </Group>
      </Ribbon>

      <AddressRow>
        <NavButtons>
          <NavButton $w={22} aria-label="Back"><Chevron w={12} h={12} d="M12 6H1.500M6 1L1 6l5 5" color="#666" sw={1.6} /></NavButton>
          <NavButton $w={28} aria-label="Forward"><Chevron w={12} h={12} d="M0 6h10.500M6 1l5 5-5 5" color="#d5d5d5" sw={1.6} /></NavButton>
          <NavButton $w={12} aria-label="Recent locations"><Chevron w={7} h={5} d="M.7.7l2.800 2.800L6.300.7" color="#777" sw={1.5} /></NavButton>
          <NavButton $w={22} aria-label="Up"><Chevron w={12} h={12} d="M6 12V1.500M1 6l5-5 5 5" color="#666" sw={1.6} /></NavButton>
        </NavButtons>
        <AddressBar>
          <Folder />
          <NavButton $w={14} aria-label="Expand"><Chevron w={5} h={8} d="M1 1l3 3-3 3" color="#666" sw={1.4} /></NavButton>
          <Crumb>Blogger Posts</Crumb>
          <Chevron w={5} h={8} d="M1 1l3 3-3 3" color="#666" sw={1.4} />
          <Crumb>Creating nameless files and folders</Crumb>
          <BarEnd>
            <BarButton aria-label="Previous locations"><Chevron w={9} h={7} d="M1 1l3.500 3.500L8 1" color="#777" sw={1.8} /></BarButton>
            <BarButton $line aria-label="Refresh">
              <Chevron w={12} h={12} d="M8.500 2.700A4.200 4.200 0 1 1 3.500 2.700M2 1.500h3.500V5" color="#666" sw={1.4} />
            </BarButton>
          </BarEnd>
        </AddressBar>
        <SearchBox>
          <SearchInput placeholder="Search Cr..." aria-label="Search" />
          <Chevron w={12} h={12} d="M4.500 7.500L.8 11.200M4.300 4.300a3.300 3.300 0 1 0 6.600 0 3.300 3.300 0 1 0-6.600 0" color="#666" sw={1.5} />
        </SearchBox>
      </AddressRow>

      <Body>
        <Sidebar>
          <TreeGroup>
            <TreeItem root on row={{ icon: StarIcon, text: "Quick access" }} />
            {quickRows.map((r) => <TreeItem key={r.text} row={r} />)}
          </TreeGroup>
          <TreeGroup><TreeItem root row={{ icon: CloudIcon, text: "OneDrive" }} /></TreeGroup>
          <TreeGroup>
            <TreeItem root row={{ icon: PcIcon, text: "This PC" }} />
            {pcRows.map((r) => <TreeItem key={r.text} row={r} />)}
          </TreeGroup>
        </Sidebar>
        <Scroller>
          <ScrollArrow aria-label="Scroll up"><Chevron w={9} h={7} d="M.8 5.500l3.700-3.700 3.700 3.700" color="#505050" sw={2} /></ScrollArrow>
          <Thumb />
          <ThumbRest />
          <ScrollArrow aria-label="Scroll down"><Chevron w={9} h={7} d="M.8 1.500l3.700 3.700 3.700-3.700" color="#505050" sw={2} /></ScrollArrow>
        </Scroller>
        <FilePane>
          <FileTable>
            <thead>
              <tr>
                <HeadCell $w={272} $pad={18}>Name<SortMark><Chevron w={9} h={5} d="M.5 4.500l4-4 4 4" color="#777" sw={1} /></SortMark></HeadCell>
                <HeadCell $w={120} $pad={6}>Date modified</HeadCell>
                <HeadCell $pad={6} $last>Type</HeadCell>
              </tr>
            </thead>
          </FileTable>
        </FilePane>
      </Body>

      <StatusBar>
        0 items
        <StatusTick />
        <ViewButtons>
          <ViewButton $on aria-label="Details view">
            <svg width="16" height="14" viewBox="0 0 16 14">
              <path d="M.5.5h4v4h-4zM.5 4.500h4v4h-4zM.5 8.500h4v4h-4z" fill="#fff" stroke="#888" />
              <path d="M2 2.500h1" stroke="#555" /><path d="M2 6.500h1" stroke="#2a8fe0" strokeWidth="1.500" /><path d="M2 10.500h1" stroke="#d8392b" strokeWidth="1.500" />
              <path d="M6 2.500h4M11 2.500h4M6 6.500h4M11 6.500h4M6 10.500h4M11 10.500h4" stroke="#666" />
            </svg>
          </ViewButton>
          <ViewButton aria-label="Large icons view">
            <svg width="14" height="12" viewBox="0 0 14 12">
              <path d="M.5.5h13v10H.5z" fill="#fff" stroke="#999" /><path d="M2 2h10v7H2z" fill="#a9d3f1" /><path d="M2 4l4 1 6 1.500V8H2z" fill="#2d7096" /><path d="M2 8h10v1H2z" fill="#6ba2d8" />
            </svg>
          </ViewButton>
        </ViewButtons>
      </StatusBar>

      <Taskbar>
        <TaskGroup>
          <TaskButton aria-label="Start">
            <svg width="16" height="16" viewBox="0 0 16 16"><path d="M0 2.300L6.500 1.400v6.100H0zM7.500 1.200L16 0v7.500H7.500zM0 8.500h6.500v6.100L0 13.700zM7.500 8.500H16V16l-8.500-1.200z" fill="#fff" /></svg>
          </TaskButton>
          <TaskButton aria-label="Search">
            <Chevron w={16} h={16} d="M6.500 9.500L.5 15.500M5.500 5.800a4.800 4.800 0 1 0 9.600 0 4.800 4.800 0 1 0-9.600 0" color="#fff" sw={1.4} />
          </TaskButton>
          <TaskButton aria-label="Task view">
            <Chevron w={20} h={14} d="M4.500.5h11v13h-11zM3 2.500H.5v9H3M17 2.500h2.500v9H17" color="#fff" sw={1} />
          </TaskButton>
        </TaskGroup>
        <TaskGroup $apps>
          <TaskButton aria-label="Edge"><Edge /></TaskButton>
          <TaskButton $on aria-label="File Explorer"><Explorer /></TaskButton>
          <TaskButton aria-label="Store"><Store /></TaskButton>
          <TaskButton aria-label="Opera beta"><Opera silver /></TaskButton>
          <TaskButton aria-label="Opera"><Opera /></TaskButton>
        </TaskGroup>
        <Tray>
          <TrayButton $w={24} aria-label="Hidden icons"><Chevron w={12} h={8} d="M.7 7L6 1.700 11.300 7" color="#fff" sw={1.4} /></TrayButton>
          <TrayButton $w={24} aria-label="Battery">
            <svg width="15" height="9" viewBox="0 0 15 9"><path d="M.5.5h12v8H.5z" fill="none" stroke="#fff" /><path d="M2 2h8v5H2zM13 3h2v3h-2z" fill="#fff" /></svg>
          </TrayButton>
          <TrayButton $w={24} aria-label="Network">
            <svg width="16" height="16" viewBox="0 0 16 16" fill="none">
              <path d="M3 0v6M0 3h6M1 1l4 4M5 1L1 5" stroke="#fff" strokeWidth=".9" />
              <path d="M4 15A11 11 0 0 1 15 4M7 15a8 8 0 0 1 8-8M10 15a5 5 0 0 1 5-5" stroke="#777" strokeWidth="1.100" /><circle cx="14" cy="14" r="1.300" fill="#777" />
            </svg>
          </TrayButton>
          <TrayButton $w={24} aria-label="Volume">
            <svg width="17" height="13" viewBox="0 0 17 13" fill="none" stroke="#fff">
              <path d="M.5 4.500h2.500L6.500 1v11L3 8.500H.5z" /><path d="M9 4.500c1 1.200 1 2.800 0 4M11.500 2.500c2 2.500 2 5.500 0 8M14 .8c2.700 3.500 2.700 8 0 11.400" />
            </svg>
          </TrayButton>
          <TrayButton $w={32} aria-label="Keyboard">
            <svg width="23" height="13" viewBox="0 0 23 13" fill="none" stroke="#fff">
              <path d="M.5.5h22v12H.5z" /><path d="M3 3.500h17M3 6.500h17" strokeDasharray="1 1" /><path d="M3 9.500h1M6 9.500h11M19 9.500h1" />
            </svg>
          </TrayButton>
          <TrayButton $w={36}><span>ENG</span><span>US</span></TrayButton>
          <TrayButton $w={66}><span>8:37 PM</span><span>8/17/2017</span></TrayButton>
          <TrayButton $w={38} aria-label="Notifications">
            <Chevron w={16} h={16} d="M.7 1.500h14.600v11H10.500l-2.500 2.700-2.500-2.700H.7z" color="#fff" sw={1.2} />
          </TrayButton>
          <ShowDesktop />
        </Tray>
      </Taskbar>

      <Menu $x={435} $y={271} $w={211}>
        {contextEntries.map((e, i) =>
          e ? (
            <li key={i}>
              <MenuItem $on={e.on} $off={e.off}>
                <MenuIcon />
                <MenuText>{e.text}</MenuText>
                {e.more && <Chevron w={12} h={9} d="M3 1l3.500 3.500L3 8" color="#333" />}
              </MenuItem>
            </li>
          ) : <MenuLine key={i} />
        )}
      </Menu>
      <Menu $x={640} $y={138} $w={260}>
        {newEntries.map((e, i) =>
          e ? (
            <li key={i}>
              <MenuItem>
                <MenuIcon><e.icon /></MenuIcon>
                <MenuText>{e.text}</MenuText>
              </MenuItem>
            </li>
          ) : <MenuLine key={i} />
        )}
      </Menu>
      <RedFrame />
      <ArrowHolder>
        <svg width="166" height="110" viewBox="0 0 166 110">
          <path d="M4 28h78V4l5 0 74 52-74 50h-5V81H4z" fill="#ed1c24" stroke="#ed1c24" strokeWidth="6" strokeLinejoin="round" />
        </svg>
      </ArrowHolder>
    </Desktop>
  );
}
